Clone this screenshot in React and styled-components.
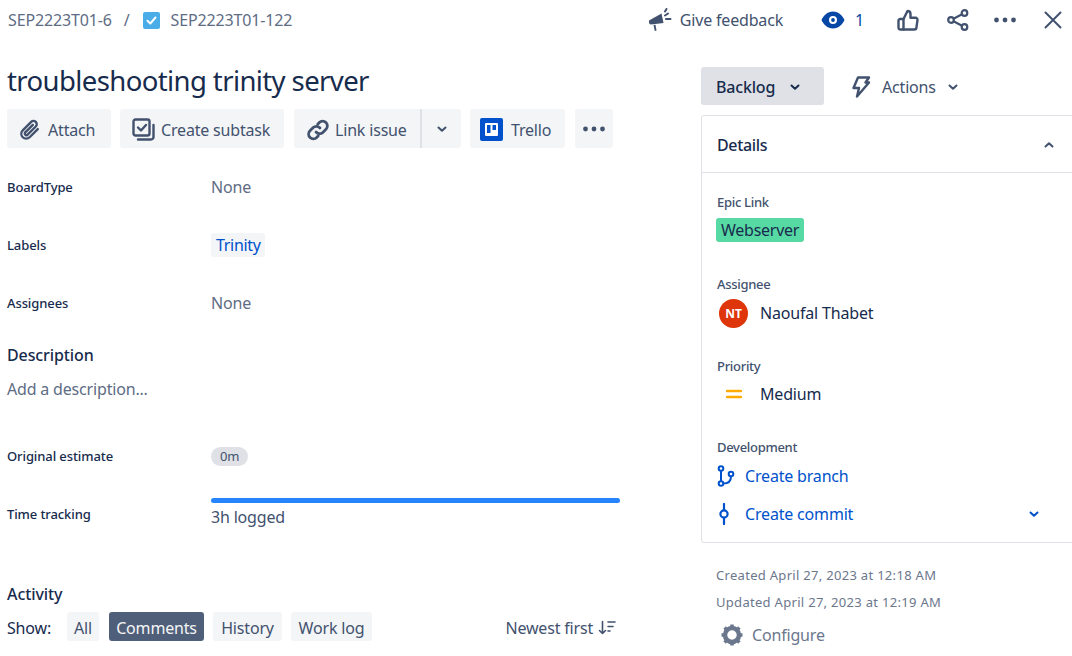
import React from "react"
import styled, { createGlobalStyle } from "styled-components"

const GlobalStyle = createGlobalStyle`
  html, body { margin: 0; padding: 0; background: #fff; overflow: hidden; }
  body { font-family: "Noto Sans", "Open Sans", sans-serif; color: #172b4d; }
  * { box-sizing: border-box; }
`

const Page = styled.div`
  width: 1072px;
  height: 656px;
  overflow: hidden;
`

const TopBar = styled.div`
  height: 40px;
  display: flex;
  align-items: center;
  justify-content: space-between;
  padding: 0 8px;
`

const Breadcrumbs = styled.div`
  display: flex;
  align-items: center;
  font-size: 16px;
  letter-spacing: -0.15px;
  color: #5e6c84;
`

const Slash = styled.span`
  margin: 0 13px 0 12px;
`

const CheckBadge = styled.span`
  width: 17px;
  height: 17px;
  border-radius: 2px;
  background: #4bade8;
  display: inline-flex;
  align-items: center;
  justify-content: center;
  margin-right: 11px;
`

const TopActions = styled.div`
  display: flex;
  align-items: center;
  color: #42526e;
  font-size: 16px;
  letter-spacing: -0.18px;
`

const Feedback = styled.div`
  display: flex;
  align-items: center;
  gap: 6px;
  margin-right: 38px;
`

const Watch = styled.div`
  display: flex;
  align-items: center;
  gap: 10px;
  color: #0747a6;
  margin-right: 33px;
`

const IconSlot = styled.span`
  display: inline-flex;
  margin-right: ${p => p.$mr || 0}px;
`

const Columns = styled.div`
  display: flex;
`

const LeftColumn = styled.div`
  width: 701px;
  flex: none;
  padding: 20px 0 0 7px;
`

const Title = styled.h1`
  margin: 0;
  font-size: 27.5px;
  font-weight: 400;
  line-height: 42px;
  letter-spacing: -0.6px;
  color: #172b4d;
`

const Toolbar = styled.div`
  display: flex;
  margin-top: 7px;
`

const ToolButton = styled.div`
  height: 39px;
  width: ${p => p.$w}px;
  margin-right: ${p => p.$mr || 0}px;
  background: #f4f5f7;
  border-radius: 3px;
  display: flex;
  align-items: center;
  justify-content: ${p => (p.$center ? "center" : "flex-start")};
  padding-left: ${p => (p.$center ? 0 : p.$pl || 12)}px;
  padding-top: ${p => (p.$center ? 0 : 2)}px;
  gap: ${p => p.$gap || 6}px;
  font-size: 16px;
  letter-spacing: -0.18px;
  color: #42526e;
`

const SplitGroup = styled.div`
  display: flex;
  margin-right: 9px;
`

const SplitLeft = styled(ToolButton)`
  border-radius: 3px 0 0 3px;
  border-right: 2px solid #dfe1e6;
`

const SplitRight = styled(ToolButton)`
  border-radius: 0 3px 3px 0;
`

const TrelloTile = styled.span`
  width: 23px;
  height: 23px;
  border-radius: 2px;
  background: #0052cc;
  display: inline-flex;
  align-items: center;
  justify-content: center;
`

const Fields = styled.div`
  margin-top: 10px;
`

const FieldRow = styled.div`
  display: flex;
  align-items: center;
  height: ${p => p.$h || 58}px;
  margin-top: ${p => p.$mt || 0}px;
`

const FieldLabel = styled.div`
  width: 204px;
  flex: none;
  font-size: 13px;
  font-weight: 500;
  letter-spacing: -0.1px;
  color: #172b4d;
`

const FieldValue = styled.div`
  font-size: 16px;
  letter-spacing: -0.18px;
  color: #5e6c84;
`

const LabelTag = styled.span`
  display: inline-block;
  background: #f4f5f7;
  color: #0052cc;
  border-radius: 3px;
  padding: 0 4px 0 5px;
  line-height: 24px;
  letter-spacing: -0.3px;
`

const SectionTitle = styled.h2`
  margin: ${p => p.$mt || 0}px 0 0;
  font-size: 16px;
  font-weight: 500;
  letter-spacing: -0.1px;
  line-height: 22px;
  color: #172b4d;
`

const Placeholder = styled.div`
  margin-top: 11px;
  font-size: 16px;
  letter-spacing: -0.18px;
  line-height: 24px;
  color: #5e6c84;
`

const EstimatePill = styled.span`
  display: inline-block;
  background: #dfe1e6;
  border-radius: 10px;
  width: 37px;
  text-align: center;
  font-size: 13px;
  line-height: 19px;
  letter-spacing: -0.3px;
  color: #42526e;
`

const TimeBlock = styled.div`
  width: 409px;
`

const ProgressTrack = styled.div`
  height: 5px;
  border-radius: 3px;
  background: #dfe1e6;
  overflow: hidden;
`

const ProgressFill = styled.div`
  height: 100%;
  background: #2684ff;
`

const Logged = styled.div`
  font-size: 16px;
  letter-spacing: -0.18px;
  line-height: 26px;
  margin-top: 1px;
  color: #42526e;
`

const ShowRow = styled.div`
  display: flex;
  align-items: center;
  margin-top: 7px;
  width: 609px;
  font-size: 16px;
  letter-spacing: -0.18px;
  color: #172b4d;
`

const ShowLabel = styled.span`
  width: 60px;
  padding-top: 2px;
`

const Filter = styled.span`
  width: ${p => p.$w}px;
  height: 29px;
  line-height: 32px;
  text-align: center;
  margin-right: ${p => p.$mr || 9}px;
  border-radius: 3px;
  background: ${p => (p.$active ? "#505f79" : "#f4f5f7")};
  color: ${p => (p.$active ? "#f4f5f7" : "#42526e")};
`

const Sort = styled.span`
  margin-left: auto;
  padding-top: 2px;
  display: flex;
  align-items: center;
  gap: 5px;
  color: #42526e;
`

const RightColumn = styled.div`
  flex: 1;
  padding-top: 27px;
`

const StatusRow = styled.div`
  display: flex;
  align-items: center;
  height: 38px;
`

const StatusButton = styled.div`
  width: 123px;
  height: 38px;
  border-radius: 3px;
  background: #dfe1e6;
  display: flex;
  align-items: center;
  padding: 2px 0 0 15px;
  gap: 14px;
  font-size: 16px;
  font-weight: 500;
  letter-spacing: -0.18px;
  color: #172b4d;
`

const ActionsButton = styled.div`
  display: flex;
  align-items: center;
  margin-left: 27px;
  padding-top: 2px;
  font-size: 16px;
  letter-spacing: -0.18px;
  color: #42526e;
  gap: 11px;
`

const DetailsPanel = styled.div`
  margin-top: 10px;
  height: 428px;
  width: 380px;
  border: 1px solid #dfe1e6;
  border-radius: 3px;
`

const DetailsHeader = styled.div`
  height: 57px;
  border-bottom: 1px solid #dfe1e6;
  display: flex;
  align-items: center;
  padding: 0 15px;
  width: 100%;
  font-size: 16px;
  line-height: 20px;
  font-weight: 500;
  letter-spacing: -0.35px;
  color: #172b4d;
`

const HeaderInner = styled.div`
  width: 338px;
  padding-top: 2px;
  display: flex;
  align-items: center;
  justify-content: space-between;
`

const DetailGroup = styled.div`
  padding-left: 15px;
  margin-top: ${p => p.$mt}px;
`

const DetailLabel = styled.div`
  font-size: 13px;
  line-height: 18px;
  font-weight: 500;
  letter-spacing: -0.3px;
  color: #42526e;
`

const EpicTag = styled.span`
  display: inline-block;
  margin: 7px 0 0 -1px;
  background: #57d9a3;
  border-radius: 3px;
  padding: 0 5px;
  line-height: 24px;
  font-size: 16px;
  letter-spacing: -0.25px;
  color: #172b4d;
`

const PersonRow = styled.div`
  display: flex;
  align-items: center;
  height: 32px;
  margin-top: ${p => p.$mt || 0}px;
  font-size: 16px;
  letter-spacing: -0.18px;
  color: #172b4d;
`

const Avatar = styled.span`
  width: 29px;
  height: 29px;
  margin: 0 12px 0 2px;
  border-radius: 50%;
  background: #de350b;
  color: #fff;
  font-size: 12px;
  font-weight: 700;
  display: inline-flex;
  align-items: center;
  justify-content: center;
`

const PriorityIcon = styled.span`
  width: 43px;
  padding-left: 9px;
  display: inline-flex;
`

const DevLink = styled.div`
  display: flex;
  align-items: center;
  height: 24px;
  margin-top: ${p => p.$mt}px;
  width: 323px;
  font-size: 16px;
  letter-spacing: -0.18px;
  color: #0052cc;
`

const DevIcon = styled.span`
  width: 28px;
  display: inline-flex;
`

const DevChevron = styled.span`
  margin-left: auto;
  display: inline-flex;
`

const Meta = styled.div`
  padding-left: 15px;
  margin-top: ${p => p.$mt}px;
  font-size: 13px;
  line-height: 18px;
  letter-spacing: 0.3px;
  color: #6b778c;
`

const ConfigureRow = styled.div`
  display: flex;
  align-items: center;
  gap: 8px;
  margin: 12px 0 0 19px;
  font-size: 16px;
  letter-spacing: -0.18px;
  color: #6b778c;
`

const Chevron = ({ color = "#42526e", up, size = 12 }) => (
  <svg width={size} height={size} viewBox="0 0 12 12">
    <path d={up ? "M2.5 7.5 6 4.2l3.5 3.3" : "M2.5 4.5 6 7.8l3.5-3.3"} fill="none" stroke={color} strokeWidth="2" strokeLinecap="round" strokeLinejoin="round" />
  </svg>
)

const Dots = ({ color = "#42526e" }) => (
  <svg width="24" height="8" viewBox="0 0 24 8">
    <circle cx="3.5" cy="4" r="2.4" fill={color} />
    <circle cx="12" cy="4" r="2.4" fill={color} />
    <circle cx="20.5" cy="4" r="2.4" fill={color} />
  </svg>
)

const Paperclip = () => (
  <svg width="22" height="22" viewBox="0 0 24 24" fill="none" stroke="#42526e" strokeWidth="2.6" strokeLinecap="round" strokeLinejoin="round">
    <path d="M20.5 11 11.6 19.9a5.3 5.3 0 0 1-7.5-7.5l9.2-9.2a3.5 3.5 0 0 1 5 5l-9.2 9.2a1.8 1.8 0 0 1-2.5-2.5l8.5-8.4" />
  </svg>
)

const Subtask = () => (
  <svg width="23" height="23" viewBox="0 0 23 23" fill="none" stroke="#42526e" strokeWidth="2.4" strokeLinecap="round" strokeLinejoin="round">
    <rect x="1.5" y="1.5" width="16" height="16" rx="2" />
    <path d="m6 9.5 3 3 5-5.5" />
    <path d="M21.5 7v12a2.5 2.5 0 0 1-2.5 2.5H6" />
  </svg>
)

const LinkIcon = ({ color = "#42526e" }) => (
  <svg width="24" height="24" viewBox="0 0 24 24" fill="none" stroke={color} strokeWidth="2.8" strokeLinecap="round" strokeLinejoin="round">
    <path d="M10 14a4.6 4.6 0 0 0 6.8.4l3.2-3.2a4.7 4.7 0 0 0-6.7-6.6l-1.6 1.6" />
    <path d="M14 10a4.6 4.6 0 0 0-6.8-.4L4 12.8a4.7 4.7 0 0 0 6.7 6.6l1.6-1.6" />
  </svg>
)

const Megaphone = () => (
  <svg width="26" height="24" viewBox="0 0 26 24" fill="#42526e">
    <path d="M1 12.5 13.5 5.5 15.5 15 3 16.5a2 2 0 0 1-2-2z" />
    <path d="M5.5 17 7.5 16.8 8.5 22.5 6.8 23z" />
    <path d="M17 7.500 20 5.500M18 11h4.500M17 3.500l1.500-2.500" stroke="#42526e" strokeWidth="2" strokeLinecap="round" />
  </svg>
)

const Eye = () => (
  <svg width="24" height="18" viewBox="0 0 24 18">
    <path fillRule="evenodd" fill="#0747a6" d="M12 .5c5.600 0 9.800 4.300 11.500 8.500C21.800 13.200 17.600 17.500 12 17.500S2.200 13.200.5 9C2.200 4.800 6.400.5 12 .5zm0 4.500a4 4 0 1 0 0 8 4 4 0 0 0 0-8z" />
    <circle cx="12" cy="9" r="1.900" fill="#0747a6" />
  </svg>
)

const ThumbUp = () => (
  <svg width="22" height="22" viewBox="0 0 22 22" fill="none" stroke="#42526e" strokeWidth="2.400" strokeLinecap="round" strokeLinejoin="round">
    <path d="M6.500 10v10.500H3a1.800 1.800 0 0 1-1.500-1.800V12A1.800 1.800 0 0 1 3 10z" />
    <path d="M6.500 10 10.500 2c1.800 0 3 1.300 3 3v3.800h5a2 2 0 0 1 2 2.300l-1.100 7.500a2 2 0 0 1-2 1.900H6.500" />
  </svg>
)

const Share = () => (
  <svg width="22" height="22" viewBox="0 0 22 22" fill="none" stroke="#42526e" strokeWidth="2.200">
    <circle cx="17.500" cy="4" r="2.800" />
    <circle cx="4" cy="11" r="2.800" />
    <circle cx="17.500" cy="18" r="2.800" />
    <path d="M6.500 9.700 15 5.300M6.500 12.300 15 16.700" />
  </svg>
)

const Close = () => (
  <svg width="18" height="18" viewBox="0 0 18 18" fill="none" stroke="#42526e" strokeWidth="2" strokeLinecap="round">
    <path d="M1.500 1.500 16.500 16.500M16.500 1.500 1.500 16.500" />
  </svg>
)

const Bolt = () => (
  <svg width="20" height="22" viewBox="0 0 20 22" fill="none" stroke="#42526e" strokeWidth="2.400" strokeLinejoin="round">
    <path d="M7 1.500h11L14.500 6.500h3.500L6 20.500 8 12H2.500z" />
  </svg>
)

const Branch = () => (
  <svg width="18" height="22" viewBox="0 0 18 22" fill="none" stroke="#0052cc" strokeWidth="2">
    <circle cx="4" cy="3.500" r="2.300" />
    <circle cx="4" cy="18.500" r="2.300" />
    <circle cx="14" cy="9" r="2.300" />
    <path d="M4 6v10M6.300 18.500C11 18.500 14 16 14 11.500" />
  </svg>
)

const Commit = () => (
  <svg width="14" height="22" viewBox="0 0 14 22" fill="none" stroke="#0052cc" strokeWidth="2.200">
    <circle cx="7" cy="11" r="3.600" />
    <path d="M7 1v6.200M7 14.800V21" strokeLinecap="round" />
  </svg>
)

const Gear = () => (
  <svg width="24" height="24" viewBox="0 0 24 24" fill="none" stroke="#6b778c" strokeWidth="4.500">
    <circle cx="12" cy="12" r="7" />
    <path d="M12 1.500v3M12 19.500v3M1.500 12h3M19.500 12h3M4.600 4.600l2.100 2.100M17.300 17.300l2.100 2.100M4.600 19.400l2.100-2.100M17.300 6.700l2.100-2.100" strokeWidth="3.500" />
  </svg>
)

const SortIcon = () => (
  <svg width="18" height="16" viewBox="0 0 18 16" fill="none" stroke="#42526e" strokeWidth="1.600" strokeLinecap="round" strokeLinejoin="round">
    <path d="M4.500 1.500v12M1.500 10.500l3 3 3-3M10 2h7M10 6.500h5M10 11h2" />
  </svg>
)

const App = () => (
  <>
    <GlobalStyle />
    <Page>
      <TopBar>
        <Breadcrumbs>
          SEP2223T01-6
          <Slash>/</Slash>
          <CheckBadge>
            <svg width="11" height="11" viewBox="0 0 11 11">
              <path d="M1.500 5.800 4.300 8.500 9.500 2.500" fill="none" stroke="#fff" strokeWidth="2" strokeLinecap="round" strokeLinejoin="round" />
            </svg>
          </CheckBadge>
          SEP2223T01-122
        </Breadcrumbs>
        <TopActions>
          <Feedback><Megaphone />Give feedback</Feedback>
          <Watch><Eye />1</Watch>
          <IconSlot $mr={28}><ThumbUp /></IconSlot>
          <IconSlot $mr={24}><Share /></IconSlot>
          <IconSlot $mr={27}><Dots /></IconSlot>
          <IconSlot $mr={2}><Close /></IconSlot>
        </TopActions>
      </TopBar>
      <Columns>
        <LeftColumn>
          <Title>troubleshooting trinity server</Title>
          <Toolbar>
            <ToolButton $w={104} $mr={9} $gap={7}><Paperclip />Attach</ToolButton>
            <ToolButton $w={164} $mr={10}><Subtask />Create subtask</ToolButton>
            <SplitGroup>
              <SplitLeft $w={128} $gap={5}><LinkIcon />Link issue</SplitLeft>
              <SplitRight $w={39} $center><Chevron /></SplitRight>
            </SplitGroup>
            <ToolButton $w={95} $mr={10} $pl={10} $gap={8}>
              <TrelloTile>
                <svg width="15" height="15" viewBox="0 0 15 15">
                  <path fillRule="evenodd" fill="#fff" d="M2 1h11a1 1 0 0 1 1 1v11a1 1 0 0 1-1 1H2a1 1 0 0 1-1-1V2a1 1 0 0 1 1-1zm1 2v8h3.500V3zm5.500 0v5H12V3z" />
                </svg>
              </TrelloTile>
              Trello
            </ToolButton>
            <ToolButton $w={38} $center><Dots /></ToolButton>
          </Toolbar>
          <Fields>
            <FieldRow>
              <FieldLabel>BoardType</FieldLabel>
              <FieldValue>None</FieldValue>
            </FieldRow>
            <FieldRow>
              <FieldLabel>Labels</FieldLabel>
              <FieldValue><LabelTag>Trinity</LabelTag></FieldValue>
            </FieldRow>
            <FieldRow>
              <FieldLabel>Assignees</FieldLabel>
              <FieldValue>None</FieldValue>
            </FieldRow>
          </Fields>
          <SectionTitle $mt={12}>Description</SectionTitle>
          <Placeholder>Add a description...</Placeholder>
          <FieldRow $mt={26}>
            <FieldLabel>Original estimate</FieldLabel>
            <EstimatePill>0m</EstimatePill>
          </FieldRow>
          <FieldRow>
            <FieldLabel>Time tracking</FieldLabel>
            <TimeBlock>
              <ProgressTrack><ProgressFill style={{ width: "100%" }} /></ProgressTrack>
              <Logged>3h logged</Logged>
            </TimeBlock>
          </FieldRow>
          <SectionTitle $mt={40}>Activity</SectionTitle>
          <ShowRow>
            <ShowLabel>Show:</ShowLabel>
            <Filter $w={32} $mr={10}>All</Filter>
            <Filter $w={95} $active>Comments</Filter>
            <Filter $w={69}>History</Filter>
            <Filter $w={81}>Work log</Filter>
            <Sort>Newest first<SortIcon /></Sort>
          </ShowRow>
        </LeftColumn>
        <RightColumn>
          <StatusRow>
            <StatusButton>Backlog<Chevron color="#172b4d" /></StatusButton>
            <ActionsButton><Bolt />Actions<Chevron /></ActionsButton>
          </StatusRow>
          <DetailsPanel>
            <DetailsHeader>
              <HeaderInner>Details<Chevron color="#42526e" up /></HeaderInner>
            </DetailsHeader>
            <DetailGroup $mt={20}>
              <DetailLabel>Epic Link</DetailLabel>
              <EpicTag>Webserver</EpicTag>
            </DetailGroup>
            <DetailGroup $mt={33}>
              <DetailLabel>Assignee</DetailLabel>
              <PersonRow $mt={4}>
                <Avatar>NT</Avatar>
                Naoufal Thabet
              </PersonRow>
            </DetailGroup>
            <DetailGroup $mt={28}>
              <DetailLabel>Priority</DetailLabel>
              <PersonRow $mt={3}>
                <PriorityIcon>
                  <svg width="16" height="14" viewBox="0 0 16 14">
                    <path d="M1 4h14M1 10h14" stroke="#ffab00" strokeWidth="2.400" strokeLinecap="round" />
                  </svg>
                </PriorityIcon>
                Medium
              </PersonRow>
            </DetailGroup>
            <DetailGroup $mt={28}>
              <DetailLabel>Development</DetailLabel>
              <DevLink $mt={8}><DevIcon><Branch /></DevIcon>Create branch</DevLink>
              <DevLink $mt={14}>
                <DevIcon><Commit /></DevIcon>
                Create commit
                <DevChevron><Chevron color="#0052cc" /></DevChevron>
              </DevLink>
            </DetailGroup>
          </DetailsPanel>
          <Meta $mt={23}>Created April 27, 2023 at 12:18 AM</Meta>
          <Meta $mt={9}>Updated April 27, 2023 at 12:19 AM</Meta>
          <ConfigureRow><Gear />Configure</ConfigureRow>
        </RightColumn>
      </Columns>
    </Page>
  </>
)

export default App
